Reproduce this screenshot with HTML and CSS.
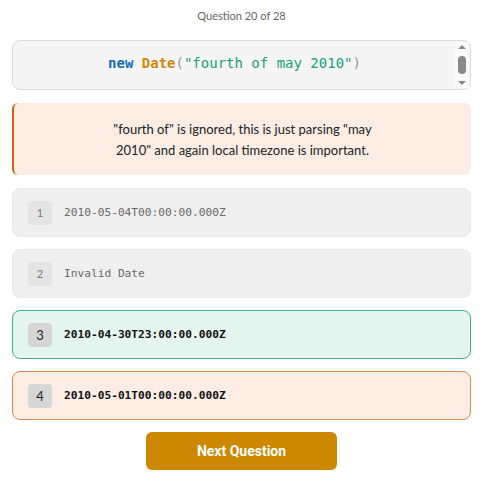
FILE: index.html
```html
<!DOCTYPE html>
<html lang="en">
<head>
    <meta charset="UTF-8">
    <meta name="viewport" content="width=device-width, initial-scale=1.0">
    <title>Date Quiz</title>
    <link rel="stylesheet" href="styles.css">
</head>
<body>
    <div class="quiz">
        <div class="progress">Question 20 of 28</div>
        <div class="code-box">
            <pre class="code"><span class="kw">new</span> <span class="fn">Date</span><span class="paren">(</span><span class="str">"fourth of may 2010"</span><span class="paren">)</span></pre>
            <div class="scrollbar">
                <span class="arrow up"></span>
                <span class="thumb"></span>
                <span class="arrow down"></span>
            </div>
        </div>
        <div class="explain">
            <p>"fourth of" is ignored, this is just parsing "may 2010" and again local timezone is important.</p>
        </div>
        <div class="options">
            <div class="option">
                <span class="num">1</span>
                <span class="answer">2010-05-04T00:00:00.000Z</span>
            </div>
            <div class="option">
                <span class="num">2</span>
                <span class="answer">Invalid Date</span>
            </div>
            <div class="option correct">
                <span class="num">3</span>
                <span class="answer">2010-04-30T23:00:00.000Z</span>
            </div>
            <div class="option wrong">
                <span class="num">4</span>
                <span class="answer">2010-05-01T00:00:00.000Z</span>
            </div>
        </div>
        <div class="actions">
            <button class="next-btn">Next Question</button>
        </div>
    </div>
</body>
</html>
```

FILE: styles.css
```css
body {
    margin: 0;
    padding: 0;
    background-color: #ffffff;
    font-family: 'Lato', 'Open Sans', sans-serif;
    color: #333;
}
.quiz {
    padding: 8px 12px 8px 12px;
}
.progress {
    text-align: center;
    font-size: 11px;
    color: #666;
    line-height: 16px;
    margin-bottom: 16px;
}
.code-box {
    position: relative;
    height: 48px;
    background-color: #f5f5f5;
    border: 1px solid #dcdcdc;
    border-radius: 8px;
    display: flex;
    align-items: center;
    justify-content: center;
}
.code {
    margin: 0;
    font-family: 'DejaVu Sans Mono', monospace;
    font-size: 14px;
    padding: 0 14px 4px 0;
}
.kw {
    color: #0f6db5;
    font-weight: bold;
}
.fn {
    color: #d4850b;
    font-weight: bold;
}
.paren {
    color: #999;
}
.str {
    color: #17a07a;
}
.scrollbar {
    position: absolute;
    top: 1px;
    right: 1px;
    bottom: 1px;
    width: 14px;
    background-color: #fafafa;
    display: flex;
    flex-direction: column;
    align-items: center;
    justify-content: space-between;
    padding: 3px 0;
    box-sizing: border-box;
}
.arrow {
    width: 0;
    height: 0;
    border-left: 4px solid transparent;
    border-right: 4px solid transparent;
}
.arrow.up {
    border-bottom: 4px solid #888;
}
.arrow.down {
    border-top: 4px solid #888;
}
.thumb {
    width: 8px;
    height: 18px;
    border-radius: 4px;
    background-color: #8a8a8a;
}
.explain {
    margin-top: 13px;
    background-color: #fbede4;
    border-left: 2px solid #d35f0f;
    border-radius: 6px;
    padding: 16px 20px 14px;
}
.explain p {
    margin: 0 auto;
    max-width: 268px;
    text-align: center;
    font-size: 13px;
    line-height: 21px;
    color: #222;
}
.options {
    margin-top: 13px;
    display: flex;
    flex-direction: column;
    gap: 12px;
}
.option {
    display: flex;
    align-items: center;
    gap: 12px;
    height: 47px;
    padding: 0 15px;
    background-color: #efefef;
    border: 1px solid #e8e8e8;
    border-radius: 8px;
}
.num {
    width: 24px;
    height: 24px;
    border-radius: 4px;
    background-color: #e4e4e4;
    display: flex;
    align-items: center;
    justify-content: center;
    font-family: 'Lato', sans-serif;
    font-size: 11px;
    color: #777;
}
.answer {
    font-family: 'DejaVu Sans Mono', monospace;
    font-size: 11.2px;
    color: #6a6a6a;
}
.option.correct {
    background-color: #e4f4ef;
    border-color: #3db48c;
}
.option.wrong {
    background-color: #fbede4;
    border-color: #e0894c;
}
.option.correct .num,
.option.wrong .num {
    background-color: #d6d6d6;
    color: #222;
    font-size: 13px;
}
.option.correct .answer,
.option.wrong .answer {
    color: #111;
    font-weight: bold;
}
.actions {
    display: flex;
    justify-content: center;
    margin-top: 12px;
}
.next-btn {
    width: 191px;
    height: 38px;
    background-color: #cc8800;
    border: none;
    border-radius: 6px;
    color: white;
    font-family: 'Roboto', sans-serif;
    font-weight: bold;
    font-size: 14px;
}
```
